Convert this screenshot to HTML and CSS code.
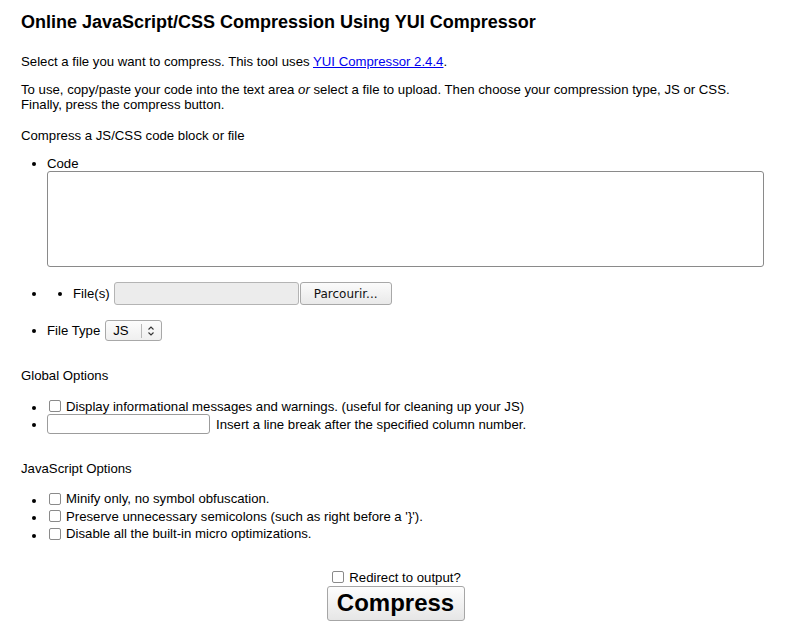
FILE: index.html
```html
<!DOCTYPE html>
<html lang="en">
<head>
<meta charset="utf-8">
<title>Online JavaScript/CSS Compression Using YUI Compressor</title>
<link rel="stylesheet" href="styles.css">
</head>
<body>
<div class="page">
  <h1 class="title">Online JavaScript/CSS Compression Using YUI Compressor</h1>
  <p class="intro">Select a file you want to compress. This tool uses <a href="#">YUI Compressor 2.4.4</a>.</p>
  <p class="intro">To use, copy/paste your code into the text area <em>or</em> select a file to upload. Then choose your compression type, JS or CSS. Finally, press the compress button.</p>

  <form class="form">
    <div class="legend legend-first">Compress a JS/CSS code block or file</div>
    <ul class="list">
      <li class="code-item">
        <div class="code-label">Code</div>
        <textarea class="code-area"></textarea>
      </li>
      <li class="files-item">
        <ul class="list">
          <li>
            <div class="row row-file">
              <span class="label">File(s)</span>
              <input class="file-path" type="text" disabled>
              <button type="button" class="browse">Parcourir...</button>
            </div>
          </li>
        </ul>
      </li>
      <li class="type-item">
        <div class="row row-type">
          <span class="label">File Type</span>
          <span class="select">
            <select class="select-native"><option>JS</option><option>CSS</option></select>
            <span class="select-sep"></span>
            <svg class="select-arrow" width="8" height="12" viewBox="0 0 8 12"><path d="M1.5 4.5 L4 2 L6.5 4.5 M1.5 7.5 L4 10 L6.5 7.5" fill="none" stroke="#333" stroke-width="1.1"/></svg>
          </span>
        </div>
      </li>
    </ul>

    <div class="legend legend-global">Global Options</div>
    <ul class="list">
      <li>
        <div class="row row-check">
          <input type="checkbox" class="check">
          <span class="label">Display informational messages and warnings. (useful for cleaning up your JS)</span>
        </div>
      </li>
      <li>
        <div class="row row-input">
          <input type="text" class="linebreak">
          <span class="label">Insert a line break after the specified column number.</span>
        </div>
      </li>
    </ul>

    <div class="legend legend-js">JavaScript Options</div>
    <ul class="list">
      <li>
        <div class="row row-opt">
          <input type="checkbox" class="check">
          <span class="label">Minify only, no symbol obfuscation.</span>
        </div>
      </li>
      <li>
        <div class="row row-opt">
          <input type="checkbox" class="check">
          <span class="label">Preserve unnecessary semicolons (such as right before a '}').</span>
        </div>
      </li>
      <li>
        <div class="row row-opt">
          <input type="checkbox" class="check">
          <span class="label">Disable all the built-in micro optimizations.</span>
        </div>
      </li>
    </ul>

    <div class="actions">
      <div class="redirect">
        <input type="checkbox" class="check">
        <span class="label">Redirect to output?</span>
      </div>
      <button type="button" class="compress">Compress</button>
    </div>
  </form>
</div>
</body>
</html>
```
FILE: styles.css
```css
* {
  box-sizing: border-box;
}

body {
  margin: 0;
  background: #fff;
  color: #000;
  font-family: "Liberation Sans", Arial, sans-serif;
  font-size: 13.2px;
  line-height: 15px;
}

.page {
  padding: 12px 33px 0 21px;
}

.title {
  font-size: 18px;
  line-height: 21px;
  font-weight: bold;
  margin: 0 0 21px;
}

.intro {
  margin: 0 0 13px;
}

.intro a {
  color: #0000ee;
}

.form {
  margin: 0;
}

.legend {
  line-height: 15px;
}

.legend-first {
  margin: 16px 0 13px;
}

.legend-global {
  margin: 27px 0 15px;
}

.legend-js {
  margin: 27px 0 14px;
}

.list {
  margin: 0;
  padding: 0 0 0 26px;
  list-style: disc;
}

.code-label {
  line-height: 15px;
}

.code-area {
  display: block;
  width: 717px;
  height: 96px;
  margin: 0;
  padding: 2px;
  border: 1px solid #8a8a8a;
  border-radius: 3px;
  resize: none;
  background: #fff;
  font: inherit;
}

.files-item {
  margin-top: 15px;
}

.type-item {
  margin-top: 15px;
}

.row {
  display: flex;
  align-items: center;
}

.row-file {
  height: 23px;
}

.row-type {
  height: 21px;
}

.row-check {
  height: 16px;
}

.row-input {
  height: 20px;
}

.row-opt {
  height: 17.5px;
}

.file-path {
  width: 185px;
  height: 23px;
  margin: 0 0 0 4px;
  padding: 0;
  border: 1px solid #b4b4b4;
  border-radius: 3px;
  background: #ececec;
}

.browse {
  width: 92px;
  height: 23px;
  margin: 0 0 0 1px;
  padding: 0;
  border: 1px solid #a8a8a8;
  border-radius: 3px;
  background: linear-gradient(#fbfbfb, #e9e9e9);
  color: #111;
  font-family: "DejaVu Sans", sans-serif;
  font-size: 12px;
}

.select {
  display: inline-flex;
  align-items: center;
  width: 57px;
  height: 21px;
  margin-left: 5px;
  border: 1px solid #a8a8a8;
  border-radius: 3px;
  background: linear-gradient(#fcfcfc, #efefef);
}

.select-native {
  appearance: none;
  -webkit-appearance: none;
  width: 35px;
  height: 19px;
  margin: 0;
  padding: 0 0 0 7px;
  border: 0;
  background: transparent;
  font-family: "Liberation Sans", Arial, sans-serif;
  font-size: 13.2px;
  color: #000;
}

.select-sep {
  width: 1px;
  height: 14px;
  background: #b8b8b8;
}

.select-arrow {
  margin-left: 5px;
}

.check {
  appearance: none;
  -webkit-appearance: none;
  flex: none;
  width: 12px;
  height: 12px;
  margin: 0 5px 0 2px;
  border: 1px solid #8a8a8a;
  border-radius: 2px;
  background: #fff;
}

.linebreak {
  width: 163px;
  height: 20px;
  margin: 0 6px 0 0;
  padding: 0 2px;
  border: 1px solid #9c9c9c;
  border-radius: 3px;
  background: #fff;
}

.actions {
  width: 749px;
  margin-top: 26px;
  display: flex;
  flex-direction: column;
  align-items: center;
}

.redirect {
  display: flex;
  align-items: center;
  height: 17px;
}

.compress {
  width: 138px;
  height: 35px;
  margin-top: 0;
  padding: 0;
  border: 1px solid #a6a6a6;
  border-radius: 3px;
  background: linear-gradient(#fdfdfd, #e6e6e6);
  color: #000;
  font-family: "Liberation Sans", Arial, sans-serif;
  font-size: 24px;
  font-weight: bold;
}
```
